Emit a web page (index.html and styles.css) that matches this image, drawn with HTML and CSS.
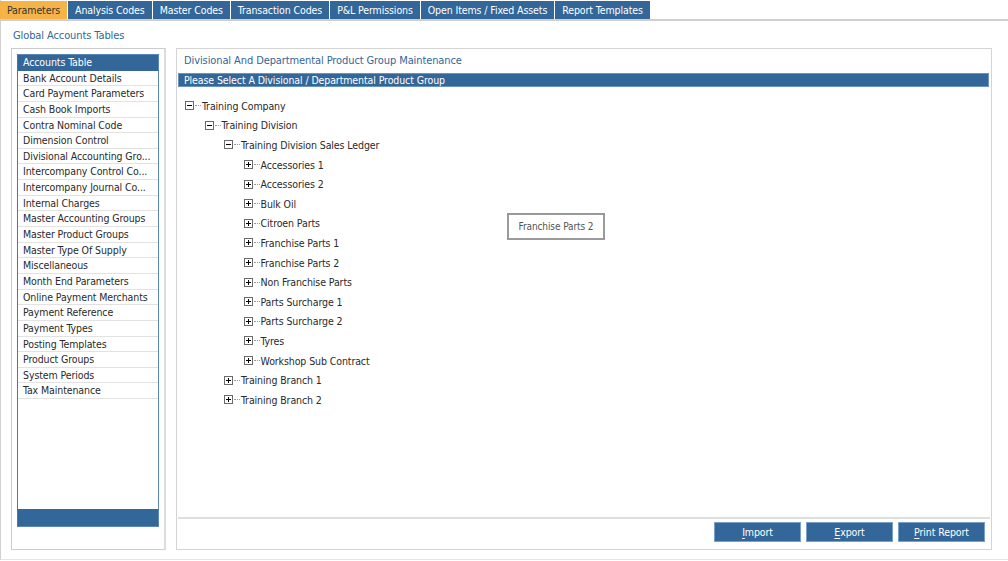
FILE: index.html
```html
<!DOCTYPE html>
<html lang="en">
<head>
<meta charset="utf-8">
<title>Parameters - Global Accounts Tables</title>
<link rel="stylesheet" href="styles.css">
</head>
<body>
<div class="app">
  <nav class="tabs">
    <a class="tab active">Parameters</a>
    <a class="tab">Analysis Codes</a>
    <a class="tab">Master Codes</a>
    <a class="tab">Transaction Codes</a>
    <a class="tab">P&amp;L Permissions</a>
    <a class="tab">Open Items / Fixed Assets</a>
    <a class="tab">Report Templates</a>
  </nav>

  <h1 class="page-title">Global Accounts Tables</h1>

  <div class="panels">
    <aside class="side">
      <div class="side-list">
        <ul class="menu">
          <li class="selected">Accounts Table</li>
          <li>Bank Account Details</li>
          <li>Card Payment Parameters</li>
          <li>Cash Book Imports</li>
          <li>Contra Nominal Code</li>
          <li>Dimension Control</li>
          <li>Divisional Accounting Gro...</li>
          <li>Intercompany Control Co...</li>
          <li>Intercompany Journal Co...</li>
          <li>Internal Charges</li>
          <li>Master Accounting Groups</li>
          <li>Master Product Groups</li>
          <li>Master Type Of Supply</li>
          <li>Miscellaneous</li>
          <li>Month End Parameters</li>
          <li>Online Payment Merchants</li>
          <li>Payment Reference</li>
          <li>Payment Types</li>
          <li>Posting Templates</li>
          <li>Product Groups</li>
          <li>System Periods</li>
          <li>Tax Maintenance</li>
        </ul>
        <div class="side-foot"></div>
      </div>
    </aside>

    <section class="main">
      <h2 class="main-title">Divisional And Departmental Product Group Maintenance</h2>
      <div class="bar">Please Select A Divisional / Departmental Product Group</div>

      <div class="tree-area">
        <ul class="tree">
          <li class="node l0"><span class="tog minus"></span><span class="dots"></span><span class="label">Training Company</span></li>
          <li class="node l1"><span class="tog minus"></span><span class="dots"></span><span class="label">Training Division</span></li>
          <li class="node l2"><span class="tog minus"></span><span class="dots"></span><span class="label">Training Division Sales Ledger</span></li>
          <li class="node l3"><span class="tog plus"></span><span class="dots"></span><span class="label">Accessories 1</span></li>
          <li class="node l3"><span class="tog plus"></span><span class="dots"></span><span class="label">Accessories 2</span></li>
          <li class="node l3"><span class="tog plus"></span><span class="dots"></span><span class="label">Bulk Oil</span></li>
          <li class="node l3"><span class="tog plus"></span><span class="dots"></span><span class="label">Citroen Parts</span></li>
          <li class="node l3"><span class="tog plus"></span><span class="dots"></span><span class="label">Franchise Parts 1</span></li>
          <li class="node l3"><span class="tog plus"></span><span class="dots"></span><span class="label">Franchise Parts 2</span></li>
          <li class="node l3"><span class="tog plus"></span><span class="dots"></span><span class="label">Non Franchise Parts</span></li>
          <li class="node l3"><span class="tog plus"></span><span class="dots"></span><span class="label">Parts Surcharge 1</span></li>
          <li class="node l3"><span class="tog plus"></span><span class="dots"></span><span class="label">Parts Surcharge 2</span></li>
          <li class="node l3"><span class="tog plus"></span><span class="dots"></span><span class="label">Tyres</span></li>
          <li class="node l3"><span class="tog plus"></span><span class="dots"></span><span class="label">Workshop Sub Contract</span></li>
          <li class="node l2"><span class="tog plus"></span><span class="dots"></span><span class="label">Training Branch 1</span></li>
          <li class="node l2"><span class="tog plus"></span><span class="dots"></span><span class="label">Training Branch 2</span></li>
        </ul>
        <div class="tooltip">Franchise Parts 2</div>
      </div>

      <div class="actions">
        <button class="btn"><u>I</u>mport</button>
        <button class="btn"><u>E</u>xport</button>
        <button class="btn"><u>P</u>rint Report</button>
      </div>
    </section>
  </div>
</div>
</body>
</html>
```

FILE: styles.css
```css
* { box-sizing: border-box; }

html, body {
  margin: 0;
  padding: 0;
  background: #ffffff;
}

body {
  font-family: "DejaVu Sans Condensed", "DejaVu Sans", sans-serif;
  font-size: 10.5px;
  letter-spacing: -0.1px;
  color: #222;
}

.app {
  width: 1008px;
  height: 560px;
  border-left: 1px solid #d0d0d0;
  border-bottom: 1px solid #e4e4e4;
}

/* top tab strip */
.tabs {
  display: flex;
  gap: 1px;
  padding-top: 1px;
  margin-left: -1px;
  height: 21px;
  border-bottom: 2px solid #cfcfcf;
}

.tab {
  display: block;
  height: 18px;
  line-height: 18px;
  padding: 0 7px;
  background: #336699;
  color: #ffffff;
  font-size: 10.5px;
  white-space: nowrap;
}

.tab.active {
  background: #f6b446;
  color: #333333;
}

.page-title {
  margin: 0;
  padding: 8px 0 0 12px;
  height: 27px;
  font-size: 11px;
  font-weight: normal;
  color: #336699;
  line-height: 14px;
}

.panels {
  display: flex;
  gap: 10px;
  padding-left: 10px;
  height: 502px;
}

/* left navigation */
.side {
  width: 155px;
  height: 502px;
  border: 1px solid #cccccc;
  border-right: 2px solid #dcdcdc;
  padding: 5px 5px 22px 5px;
}

.side-list {
  height: 473px;
  border: 1px solid #5a86b5;
  border-left-color: #4a78aa;
  display: flex;
  flex-direction: column;
}

.menu {
  list-style: none;
  margin: 0;
  padding: 0;
  flex: 1;
}

.menu li {
  height: 15.65px;
  line-height: 15px;
  padding-left: 5px;
  border-bottom: 1px solid #e2e2e2;
  color: #2a2a2a;
  white-space: nowrap;
  overflow: hidden;
}

.menu li.selected {
  background: #336699;
  color: #ffffff;
  border-bottom-color: #336699;
}

.side-foot {
  height: 17px;
  background: #336699;
}

/* main content panel */
.main {
  width: 816px;
  height: 502px;
  border: 1px solid #d4d4d4;
  padding: 1px;
  display: flex;
  flex-direction: column;
}

.main-title {
  margin: 0;
  padding: 4px 0 0 6px;
  height: 23px;
  font-size: 11px;
  font-weight: normal;
  color: #336699;
  line-height: 14px;
}

.bar {
  height: 14px;
  line-height: 14px;
  margin-right: 1px;
  padding-left: 6px;
  background: #336699;
  color: #ffffff;
  font-size: 10.5px;
  box-shadow: 0 0 0 1px #6a93bd inset;
}

.tree-area {
  position: relative;
  flex: 1;
  border-bottom: 2px solid #dedede;
  padding-top: 9px;
}

.tree {
  list-style: none;
  margin: 0;
  padding: 0 0 0 7px;
}

.node {
  display: flex;
  align-items: center;
  height: 19.6px;
}

.node.l1 { padding-left: 19.5px; }
.node.l2 { padding-left: 39px; }
.node.l3 { padding-left: 58.5px; }

.tog {
  position: relative;
  width: 9px;
  height: 9px;
  border: 1px solid #6a6a6a;
  background: #ffffff;
  flex: none;
}

.tog::before {
  content: "";
  position: absolute;
  left: 1px;
  top: 3px;
  width: 5px;
  height: 1px;
  background: #000000;
}

.tog.plus::after {
  content: "";
  position: absolute;
  left: 3px;
  top: 1px;
  width: 1px;
  height: 5px;
  background: #000000;
}

.dots {
  width: 6px;
  height: 1px;
  margin: 0 1px 0 1px;
  border-top: 1px dotted #999999;
  flex: none;
}

.label {
  font-size: 10.5px;
  color: #2a2a2a;
  white-space: nowrap;
}

/* hover hint over the tree */
.tooltip {
  position: absolute;
  left: 329px;
  top: 126px;
  width: 98px;
  height: 27px;
  border: 2px solid #9a9a9a;
  background: #ffffff;
  color: #555555;
  font-size: 10px;
  line-height: 23px;
  text-align: center;
}

.actions {
  display: flex;
  justify-content: flex-end;
  gap: 5px;
  padding: 3px 5px 0 0;
  height: 29px;
}

.btn {
  width: 87px;
  height: 20px;
  padding: 0;
  border: 1px solid #7aa0c8;
  background: #336699;
  color: #ffffff;
  font-family: inherit;
  font-size: 10.5px;
  letter-spacing: -0.1px;
  line-height: 18px;
  cursor: pointer;
}

.btn u {
  text-decoration: underline;
  text-underline-offset: 2px;
}
```
